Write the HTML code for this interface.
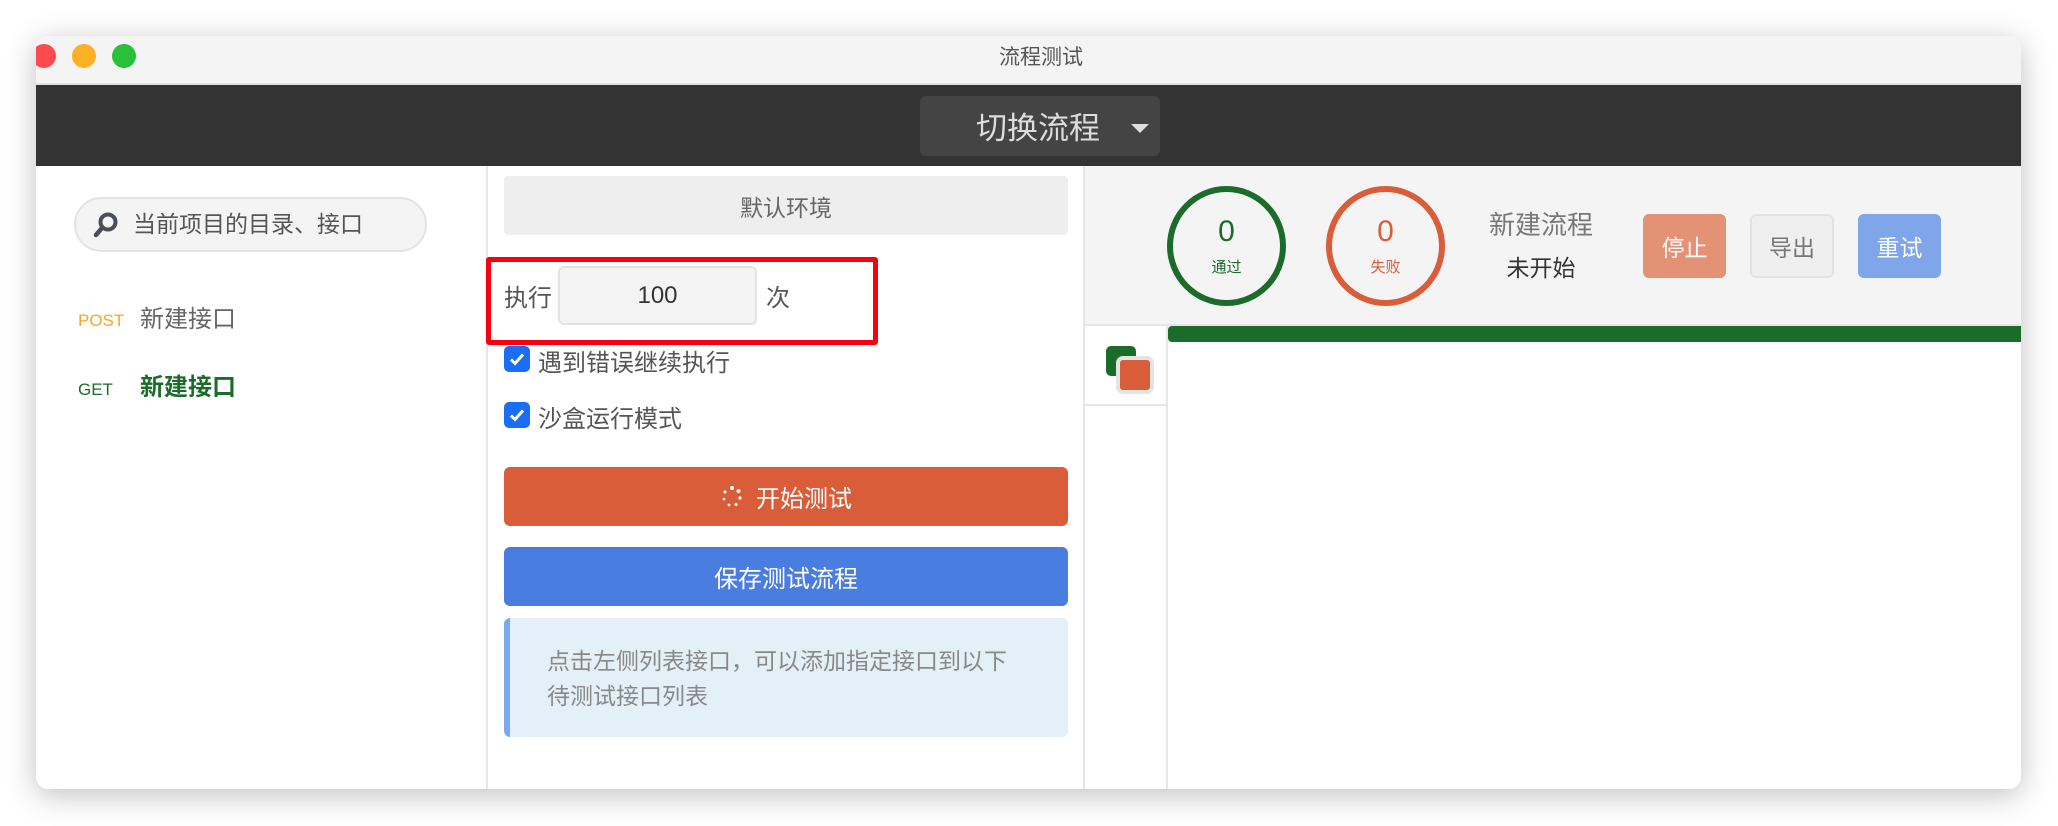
<!DOCTYPE html>
<html><head><meta charset="utf-8"><style>
*{box-sizing:border-box;margin:0;padding:0}
body{width:2058px;height:826px;background:#fff;font-family:"Liberation Sans","Noto Sans CJK SC",sans-serif;position:relative;overflow:hidden}
.a{position:absolute}
.win{left:36px;top:36px;width:1985px;height:753px;border-radius:12px;overflow:hidden;background:#fff;box-shadow:0 6px 30px rgba(0,0,0,.25)}
.c{display:flex;align-items:center;justify-content:center}
</style></head><body>
<div class="a win">
  <div class="a" style="left:0;top:0;width:1985px;height:49px;background:#f4f4f4"></div>
  <div class="a" style="left:0;top:47px;width:1985px;height:2px;background:#e2e2e2"></div>
  <div class="a" style="left:-4px;top:8px;width:24px;height:24px;border-radius:50%;background:#fc4b4e"></div>
  <div class="a" style="left:36px;top:8px;width:24px;height:24px;border-radius:50%;background:#fdb023"></div>
  <div class="a" style="left:76px;top:8px;width:24px;height:24px;border-radius:50%;background:#28c13a"></div>
  <div class="a c" style="left:0;top:0;width:2010px;height:40px;font-size:21px;color:#555">流程测试</div>
  <div class="a" style="left:0;top:49px;width:1985px;height:81px;background:#333"></div>
  <div class="a" style="left:884px;top:60px;width:240px;height:60px;background:#444;border-radius:6px"></div>
  <div class="a" style="left:940px;top:71px;font-size:31px;color:#ddd;line-height:44px">切换流程</div>
  <div class="a" style="left:1095px;top:88px;width:0;height:0;border-left:9px solid transparent;border-right:9px solid transparent;border-top:9px solid #ddd"></div>
  <!-- left -->
  <div class="a" style="left:450px;top:130px;width:2px;height:623px;background:#e6e6e6"></div>
  <div class="a" style="left:38px;top:161px;width:353px;height:55px;border-radius:28px;background:#f4f4f4;border:2px solid #e3e3e3"></div>
  <svg class="a" style="left:56px;top:175px" width="28" height="28" viewBox="0 0 28 28"><circle cx="16" cy="11" r="7.5" fill="none" stroke="#4a4f57" stroke-width="4"/><line x1="10" y1="17" x2="4" y2="24" stroke="#4a4f57" stroke-width="4.5" stroke-linecap="round"/></svg>
  <div class="a" style="left:97px;top:172px;font-size:23px;color:#555;line-height:32px">当前项目的目录、接口</div>
  <div class="a" style="left:42px;top:273px;font-size:17px;color:#f6a623;line-height:24px">POST</div>
  <div class="a" style="left:104px;top:268px;font-size:24px;color:#666;line-height:32px">新建接口</div>
  <div class="a" style="left:42px;top:342px;font-size:17px;color:#1b6b2a;line-height:24px">GET</div>
  <div class="a" style="left:104px;top:336px;font-size:24px;font-weight:bold;color:#1b6b2a;line-height:32px">新建接口</div>
  <!-- middle -->
  <div class="a" style="left:1047px;top:130px;width:2px;height:623px;background:#e6e6e6"></div>
  <div class="a c" style="left:468px;top:140px;width:564px;height:59px;background:#eee;border-radius:4px;font-size:23px;color:#666">默认环境</div>
  <div class="a" style="left:450px;top:221px;width:392px;height:88px;border:5px solid #f70011;border-radius:3px"></div>
  <div class="a" style="left:468px;top:247px;font-size:24px;color:#555;line-height:32px">执行</div>
  <div class="a c" style="left:522px;top:230px;width:199px;height:59px;background:#f4f4f4;border:2px solid #e3e3e3;border-radius:6px;font-size:24px;color:#333">100</div>
  <div class="a" style="left:730px;top:247px;font-size:24px;color:#555;line-height:32px">次</div>
  <div class="a c" style="left:468px;top:310px;width:26px;height:26px;background:#1a6ef5;border-radius:5px"><svg width="18" height="18" viewBox="0 0 18 18"><path d="M3 9.5l4 4 8-9" fill="none" stroke="#fff" stroke-width="3"/></svg></div>
  <div class="a" style="left:502px;top:312px;font-size:24px;color:#555;line-height:32px">遇到错误继续执行</div>
  <div class="a c" style="left:468px;top:366px;width:26px;height:26px;background:#1a6ef5;border-radius:5px"><svg width="18" height="18" viewBox="0 0 18 18"><path d="M3 9.5l4 4 8-9" fill="none" stroke="#fff" stroke-width="3"/></svg></div>
  <div class="a" style="left:502px;top:368px;font-size:24px;color:#555;line-height:32px">沙盒运行模式</div>
  <div class="a c" style="left:468px;top:431px;width:564px;height:59px;background:#d95d39;border-radius:6px;font-size:24px;color:#fff"><svg width="24" height="24" viewBox="0 0 24 24" style="margin-right:12px"><g fill="#fff"><circle cx="12" cy="3" r="2"/><circle cx="18.5" cy="6" r="2"/><circle cx="20" cy="13" r="1.6"/><circle cx="16" cy="19.5" r="1.5"/><circle cx="9" cy="20" r="1.4"/><circle cx="4" cy="14" r="1.3"/><circle cx="5" cy="7" r="1.5"/></g></svg>开始测试</div>
  <div class="a c" style="left:468px;top:511px;width:564px;height:59px;background:#4a7de0;border-radius:6px;font-size:24px;color:#fff">保存测试流程</div>
  <div class="a" style="left:468px;top:582px;width:564px;height:119px;background:#e4f0f8;border-left:6px solid #7aa9f0;border-radius:6px"></div>
  <div class="a" style="left:511px;top:608px;width:520px;font-size:23px;color:#888;line-height:35px">点击左侧列表接口，可以添加指定接口到以下<br>待测试接口列表</div>
  <!-- right -->
  <div class="a" style="left:1049px;top:130px;width:936px;height:158px;background:#f4f4f4"></div>
  <div class="a" style="left:1049px;top:288px;width:936px;height:2px;background:#e6e6e6"></div>
  <div class="a" style="left:1130px;top:290px;width:2px;height:463px;background:#e6e6e6"></div>
  <div class="a" style="left:1049px;top:368px;width:81px;height:2px;background:#e6e6e6"></div>
  <div class="a" style="left:1131px;top:150px;width:119px;height:120px;border:6px solid #1b6b2a;border-radius:50%"></div>
  <div class="a" style="left:1131px;top:178px;width:119px;text-align:center;font-size:30px;color:#1b6b2a;line-height:36px">0</div>
  <div class="a" style="left:1131px;top:222px;width:119px;text-align:center;font-size:15px;color:#1b6b2a;line-height:20px">通过</div>
  <div class="a" style="left:1290px;top:150px;width:119px;height:120px;border:6px solid #d95d39;border-radius:50%"></div>
  <div class="a" style="left:1290px;top:178px;width:119px;text-align:center;font-size:30px;color:#d95d39;line-height:36px">0</div>
  <div class="a" style="left:1290px;top:222px;width:119px;text-align:center;font-size:15px;color:#d95d39;line-height:20px">失败</div>
  <div class="a" style="left:1445px;top:171px;width:120px;text-align:center;font-size:26px;color:#777;line-height:36px">新建流程</div>
  <div class="a" style="left:1445px;top:214px;width:120px;text-align:center;font-size:23px;color:#333;line-height:36px">未开始</div>
  <div class="a c" style="left:1607px;top:178px;width:83px;height:64px;background:#e49276;border-radius:6px;font-size:23px;color:#fff">停止</div>
  <div class="a c" style="left:1714px;top:178px;width:84px;height:64px;background:#efefef;border:2px solid #e3e3e3;border-radius:6px;font-size:23px;color:#777">导出</div>
  <div class="a c" style="left:1822px;top:178px;width:83px;height:64px;background:#80a6ea;border-radius:6px;font-size:23px;color:#fff">重试</div>
  <div class="a" style="left:1132px;top:290px;width:853px;height:16px;background:#1b6b2a;border-radius:4px 0 0 4px"></div>
  <div class="a" style="left:1070px;top:310px;width:30px;height:30px;background:#1b6b2a;border-radius:5px"></div>
  <div class="a" style="left:1080px;top:320px;width:38px;height:38px;background:#d95d39;border:4px solid #e4e4e4;border-radius:7px"></div>
</div>
</body></html>
